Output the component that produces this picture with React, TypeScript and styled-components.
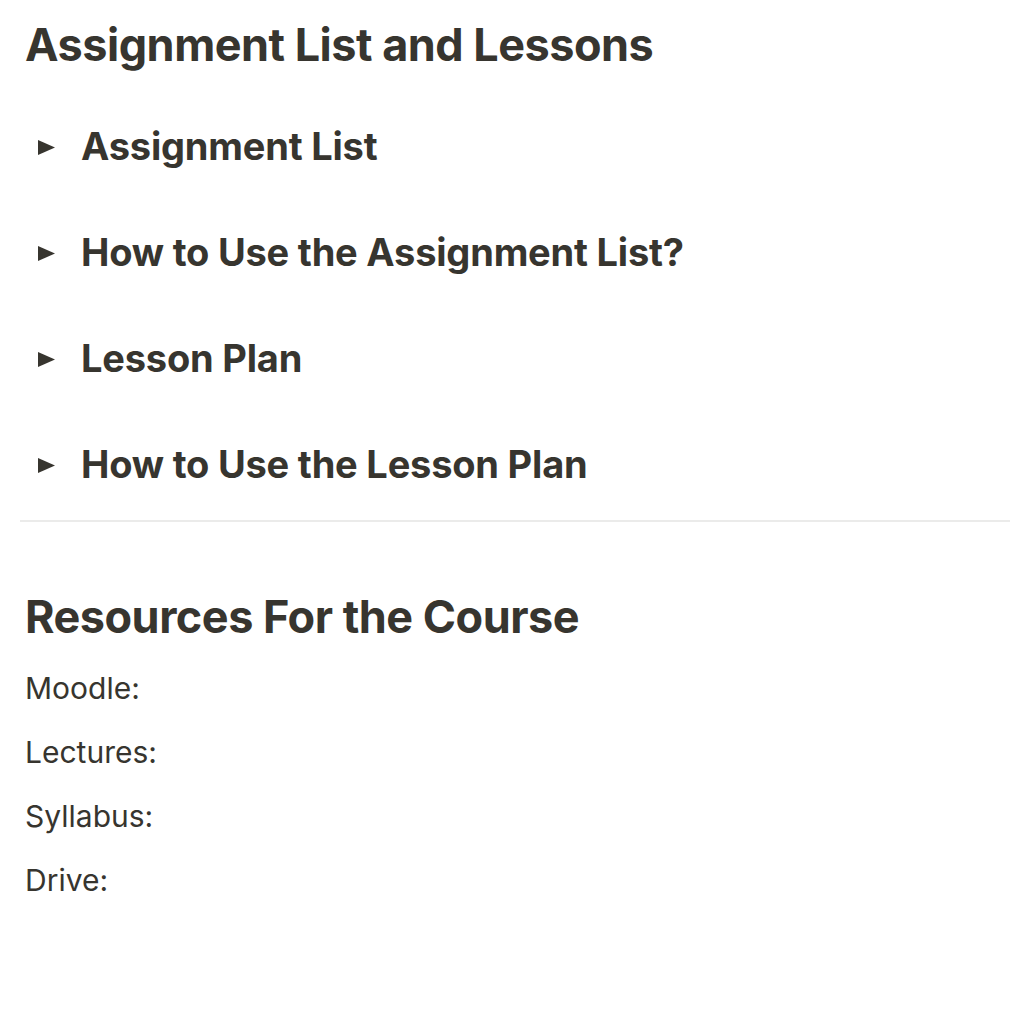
import React from 'react';
import styled, { createGlobalStyle } from 'styled-components';

const Global = createGlobalStyle`
  html, body {
    margin: 0;
    padding: 0;
    background: #ffffff;
  }
  body {
    font-family: Inter, "Noto Sans", "Liberation Sans", sans-serif;
    color: #37352f;
    -webkit-font-smoothing: antialiased;
  }
`;

const Page = styled.div`
  width: 1010px;
  padding: 18px 0 0 20px;
  box-sizing: border-box;
`;

const Heading = styled.h1`
  margin: 0;
  padding: 0 0 0 5px;
  font-size: 45px;
  font-weight: 700;
  letter-spacing: -0.5px;
  line-height: 1.2;
`;

const ToggleList = styled.div`
  display: flex;
  flex-direction: column;
  margin-top: 22px;
`;

const ToggleRow = styled.div`
  display: flex;
  align-items: center;
  height: 106px;
`;

const Arrow = styled.span`
  width: 61px;
  box-sizing: border-box;
  display: flex;
  padding: 1px 0 0 18px;
  color: #37352f;
`;

const ToggleTitle = styled.h2`
  margin: 0;
  font-size: 38px;
  font-weight: 700;
  letter-spacing: -0.2px;
  line-height: 1.2;
`;

const Divider = styled.hr`
  border: none;
  border-top: 2px solid #ebebea;
  margin: 2px 0 0;
`;

const Section = styled.div`
  margin-top: 68px;
`;

const Lines = styled.div`
  display: flex;
  flex-direction: column;
  margin-top: 12px;
  padding-left: 5px;
`;

const Line = styled.div`
  height: 64px;
  display: flex;
  align-items: center;
  font-size: 30px;
`;

function Triangle() {
  return (
    <svg width="17" height="15" viewBox="0 0 17 15" aria-hidden>
      <path d="M0 0 L17 7.5 L0 15 Z" fill="currentColor" />
    </svg>
  );
}

const toggles = [
  'Assignment List',
  'How to Use the Assignment List?',
  'Lesson Plan',
  'How to Use the Lesson Plan',
];

const resources = ['Moodle:', 'Lectures:', 'Syllabus:', 'Drive:'];

export default function App() {
  return (
    <>
      <Global />
      <Page>
        <Heading>Assignment List and Lessons</Heading>
        <ToggleList>
          {toggles.map((t) => (
            <ToggleRow key={t}>
              <Arrow>
                <Triangle />
              </Arrow>
              <ToggleTitle>{t}</ToggleTitle>
            </ToggleRow>
          ))}
        </ToggleList>
        <Divider />
        <Section>
          <Heading as="h2">Resources For the Course</Heading>
          <Lines>
            {resources.map((r) => (
              <Line key={r}>{r}</Line>
            ))}
          </Lines>
        </Section>
      </Page>
    </>
  );
}
